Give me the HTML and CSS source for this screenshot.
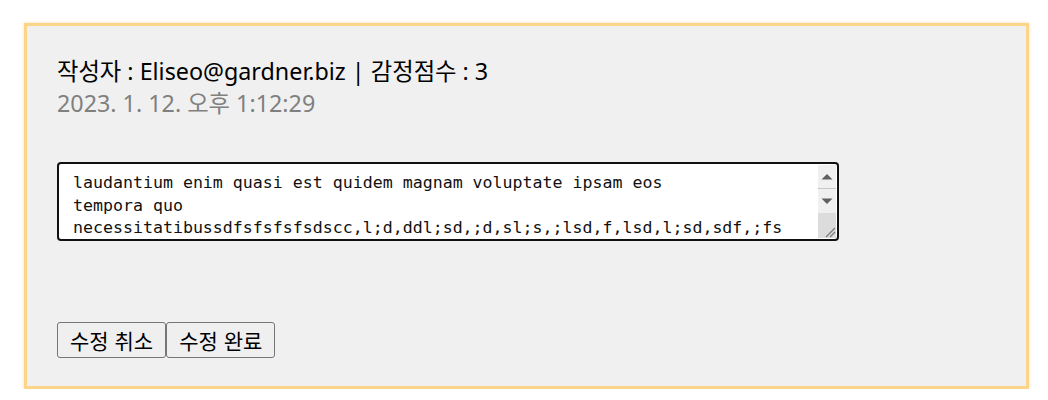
FILE: index.html
```html
<!DOCTYPE html>
<html lang="ko">
<head>
<meta charset="utf-8">
<link rel="stylesheet" href="styles.css">
</head>
<body>
<div class="card">
  <div class="info">
    <div class="author">작성자 : Eliseo@gardner.biz | 감정점수 : 3</div>
    <div class="date">2023. 1. 12. 오후 1:12:29</div>
  </div>
  <div class="editor">
    <textarea class="content">laudantium enim quasi est quidem magnam voluptate ipsam eos
tempora quo necessitatibussdfsfsfsfsdscc,l;d,ddl;sd,;d,sl;s,;lsd,f,lsd,l;sd,sdf,;fs</textarea>
    <div class="scrollbar">
      <div class="sb-btn sb-up">
        <svg width="18" height="8" viewBox="0 0 18 8"><path d="M3.5 6.5h11l-5.5-5.5z" fill="#606060"/></svg>
      </div>
      <div class="sb-btn sb-down">
        <svg width="18" height="8" viewBox="0 0 18 8"><path d="M3.5 1.5h11l-5.5 5.5z" fill="#606060"/></svg>
      </div>
      <div class="sb-corner">
        <svg width="18" height="18" viewBox="0 0 18 18"><path d="M17 8L8 17M17 12L12 17" stroke="#7a7a7a" stroke-width="1.2" fill="none"/></svg>
      </div>
    </div>
  </div>
  <div class="actions">
    <button class="btn">수정 취소</button><button class="btn">수정 완료</button>
  </div>
</div>
</body>
</html>
```
FILE: styles.css
```css
body {
  margin: 8px;
  background: #ffffff;
  font-family: "Noto Sans", "Noto Sans CJK KR", sans-serif;
}
.card {
  margin: 15px 11px 0 16px;
  border: 3px solid #fdd58a;
  box-shadow: 0 0 3px rgba(253, 200, 120, 0.6);
  background: #f0f0f0;
  padding: 29px 30px 28px 30px;
  height: 303px;
  display: flex;
  flex-direction: column;
}
.author {
  font-size: 23.3px;
  line-height: 32px;
  height: 32px;
  color: #000;
}
.date {
  font-size: 23.3px;
  line-height: 32px;
  height: 32px;
  color: #808080;
}
.editor {
  margin-top: 43px;
  box-sizing: border-box;
  width: 782px;
  height: 79px;
  border: 2px solid #111;
  border-radius: 4px;
  padding: 1px;
  background: #fff;
  display: flex;
}
.content {
  flex: 1;
  min-width: 0;
  box-sizing: border-box;
  margin: 0;
  padding: 7px 13px 0 13px;
  border: none;
  font-family: "DejaVu Sans Mono", "Liberation Mono", monospace;
  font-size: 16.6px;
  line-height: 22.5px;
  color: #111;
  background: #fff;
  resize: none;
  overflow: hidden;
  outline: none;
}
.scrollbar {
  width: 18px;
  display: flex;
  flex-direction: column;
  background: #f0f0f0;
}
.sb-btn {
  height: 24px;
  display: flex;
  align-items: center;
  justify-content: center;
}
.sb-up {
  border-bottom: 1px solid #c8c8c8;
  height: 23px;
}
.sb-corner {
  flex: 1;
  background: #dcdcdc;
  display: flex;
  align-items: flex-end;
}
.sb-corner svg {
  display: block;
}
.actions {
  margin-top: auto;
  display: flex;
}
.btn {
  height: 36px;
  padding: 0 12px;
  font-family: "Noto Sans CJK KR", sans-serif;
  font-size: 21px;
  color: #000;
  background: #efefef;
  border: 1px solid #767676;
  border-radius: 3px;
  margin: 0;
}
```
